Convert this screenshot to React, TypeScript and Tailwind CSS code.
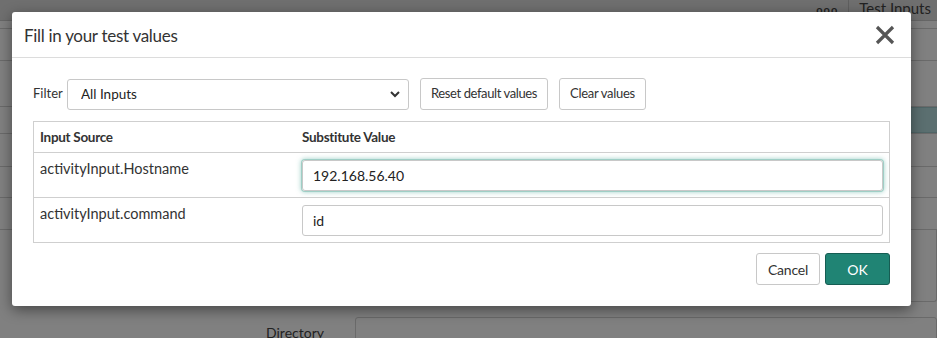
import React, { useState } from 'react';

const font = { fontFamily: 'Lato, "Noto Sans", sans-serif' };

const BgRow: React.FC<{ h: string; teal?: boolean }> = ({ h, teal }) => (
  <div className={`${h} border-b border-[#6a6a6a] flex justify-end items-end`}>
    {teal && <div className="w-[26px] h-[26px] bg-[#5b6f70] border-y border-[#4f6566]" />}
  </div>
);

const App: React.FC = () => {
  const [filter, setFilter] = useState('All Inputs');
  const [host, setHost] = useState('192.168.56.40');
  const [cmd, setCmd] = useState('id');

  return (
    <div className="relative w-[937px] h-[338px] overflow-hidden bg-[#808080] text-[#333]" style={font}>
      {/* page behind the overlay */}
      <div className="flex flex-col">
        <div className="h-[21px] bg-[#6f6f6f] border-b border-[#666] flex items-center justify-end">
          <span className="text-[11px] font-bold tracking-[1px] text-[#222] pr-[10px]">ooo</span>
          <div className="h-full border-l border-[#5f5f5f]" />
          <span className="text-[15px] text-[#222] pl-[10px] pr-[6px] -mt-[4px]">Test Inputs</span>
        </div>
        <BgRow h="h-[8px]" />
        <BgRow h="h-[32px]" />
        <BgRow h="h-[46px]" />
        <BgRow h="h-[27px]" teal />
        <BgRow h="h-[33px]" />
        <BgRow h="h-[31px]" />
        <BgRow h="h-[32px]" />
        <div className="h-[72px] flex">
          <div className="w-[310px]" />
          <div className="flex-1 border border-t-0 border-[#6a6a6a] rounded-b-[3px]" />
        </div>
        <div className="flex items-start mt-[15px]">
          <div className="w-[325px] text-right text-[14px] text-[#222] pr-[1px] pt-[5px]">Directory</div>
          <div className="flex-1 h-[30px] ml-[30px] border border-[#6a6a6a] rounded-[3px]" />
        </div>
      </div>

      {/* modal */}
      <div className="absolute left-[12px] top-[12px] w-[899px] h-[294px] bg-white rounded-[3px] shadow-[0_4px_14px_rgba(0,0,0,0.45)] flex flex-col">
        <header className="h-[46px] border-b border-[#dcdcdc] flex items-center justify-between pl-[12px] pr-[16px]">
          <h2 className="text-[17px] tracking-[-0.3px] text-[#333] pt-[2px]">Fill in your test values</h2>
          <button className="text-[#555]">
            <svg width="20" height="20" viewBox="0 0 20 20" fill="none" stroke="currentColor" strokeWidth={3.2} strokeLinecap="butt">
              <path d="M2 2L18 18M18 2L2 18" />
            </svg>
          </button>
        </header>

        <div className="px-[21px] pt-[20px] flex flex-col">
          <div className="flex items-center h-[32px]">
            <label className="text-[13px] text-[#333] w-[34px]">Filter</label>
            <div className="relative w-[342px] h-[31px] ml-[0px]">
              <select
                value={filter}
                onChange={e => setFilter(e.target.value)}
                className="appearance-none w-full h-full border border-[#c8c8c8] rounded-[3px] pl-[13px] pr-8 text-[13.5px] text-[#222] bg-white outline-none"
                style={font}
              >
                <option>All Inputs</option>
                <option>Required Inputs</option>
              </select>
              <svg className="absolute right-[9px] top-[12px] pointer-events-none" width="10" height="7" viewBox="0 0 10 7" fill="none" stroke="#333" strokeWidth={2}>
                <path d="M1 1l4 4 4-4" />
              </svg>
            </div>
            <button className="ml-[11px] w-[128px] h-[32px] border border-[#c8c8c8] rounded-[3px] text-[13px] tracking-[-0.4px] text-[#333] bg-white">
              Reset default values
            </button>
            <button className="ml-[11px] w-[87px] h-[32px] border border-[#c8c8c8] rounded-[3px] text-[13px] tracking-[-0.3px] text-[#333] bg-white">
              Clear values
            </button>
          </div>

          <div className="mt-[11px] border border-[#cfcfcf] text-[14.5px]">
            <div className="h-[31px] border-b border-[#cfcfcf] flex items-center font-bold text-[13.5px] tracking-[-0.3px] text-[#333]">
              <div className="w-[268px] pl-[6px]">Input Source</div>
              <div className="pl-[0px]">Substitute Value</div>
            </div>
            <div className="h-[45px] border-b border-[#cfcfcf] flex">
              <div className="w-[268px] pl-[6px] pt-[5px]">activityInput.Hostname</div>
              <div className="flex-1 pr-[6px] pt-[7px]">
                <input
                  value={host}
                  onChange={e => setHost(e.target.value)}
                  className="w-full h-[31px] border border-[#c8c8c8] rounded-[3px] px-[10px] text-[14px] text-[#222] outline-none shadow-[0_0_0_1px_#9fcfc6,0_0_5px_1px_rgba(80,170,155,0.55)]"
                  style={font}
                />
              </div>
            </div>
            <div className="h-[44px] flex">
              <div className="w-[268px] pl-[6px] pt-[5px]">activityInput.command</div>
              <div className="flex-1 pr-[6px] pt-[7px]">
                <input
                  value={cmd}
                  onChange={e => setCmd(e.target.value)}
                  className="w-full h-[31px] border border-[#c8c8c8] rounded-[3px] px-[10px] text-[14px] text-[#222] outline-none"
                  style={font}
                />
              </div>
            </div>
          </div>

          <div className="flex justify-end mt-[10px] gap-[5px]">
            <button className="w-[64px] h-[32px] border border-[#c8c8c8] rounded-[3px] text-[14px] tracking-[-0.2px] text-[#333] bg-white">Cancel</button>
            <button className="w-[65px] h-[32px] border border-[#165d53] rounded-[3px] text-[14px] text-white bg-[#208474]">OK</button>
          </div>
        </div>
      </div>
    </div>
  );
};

export default App;
